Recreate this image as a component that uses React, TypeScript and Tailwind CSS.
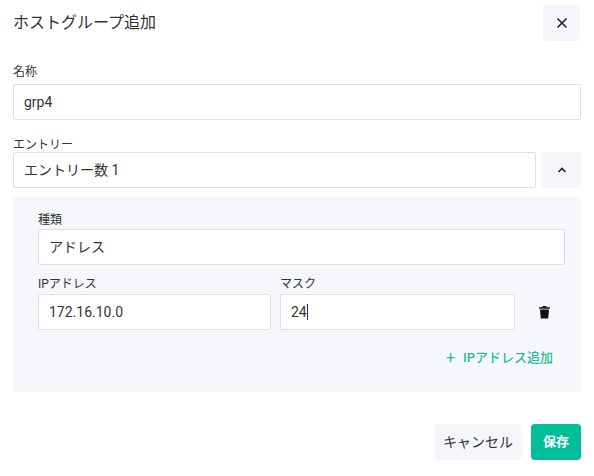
export default function App() {
  const f = { fontFamily: 'Roboto, "Noto Sans CJK JP", sans-serif' };
  const inp = "h-[36px] w-full border border-[#dcdfe6] rounded-[2px] bg-white flex items-center px-[10px] text-[14px] text-[#333]";
  return (
    <div style={f} className="w-[594px] h-[476px] bg-white px-[13px] pt-[4px] text-[#333]">
      <div className="flex items-center justify-between h-[37px]">
        <div className="text-[16px] text-[#333]">ホストグループ追加</div>
        <div className="w-[37px] h-[36px] mr-[1px] rounded-[4px] bg-[#f5f6fa] flex items-center justify-center">
          <svg width="12" height="12" viewBox="0 0 12 12" stroke="#222" strokeWidth="1.6"><path d="M1.5 1.5l9 9M10.5 1.5l-9 9"/></svg>
        </div>
      </div>
      <div className="mt-[22px] text-[12px] h-[19px]">名称</div>
      <div className={inp + " mt-[2px]"}>grp4</div>
      <div className="mt-[16px] text-[12px] h-[19px]">エントリー</div>
      <div className="flex gap-[6px] mt-[-3px]">
        <div className={inp + " flex-1"}>エントリー数 1</div>
        <div className="w-[39px] h-[36px] rounded-[4px] bg-[#f5f6fa] flex items-center justify-center">
          <svg width="10" height="6" viewBox="0 0 10 6" stroke="#222" strokeWidth="1.6" fill="none"><path d="M1.5 5L5 1.5 8.5 5"/></svg>
        </div>
      </div>
      <div className="mt-[9px] h-[195px] bg-[#f6f7fb] rounded-[4px] pl-[25px] pr-[16px] pt-[14px]">
        <div className="text-[12px] h-[18px]">種類</div>
        <div className={inp}>アドレス</div>
        <div className="flex mt-[10px] gap-[9px] items-end">
          <div className="w-[233px] shrink-0">
            <div className="text-[12px] h-[19px]">IPアドレス</div>
            <div className={inp}>172.16.10.0</div>
          </div>
          <div className="w-[235px] shrink-0">
            <div className="text-[12px] h-[19px]">マスク</div>
            <div className={inp + " border-[#3cc7a8]"}>24<span className="inline-block w-px h-[16px] bg-[#333]"></span></div>
          </div>
          <div className="w-[56px] h-[36px] flex items-center justify-center">
            <svg width="11" height="13" viewBox="0 0 11 13" fill="#111"><rect x="0" y="1.2" width="11" height="1.5" rx="0.4"/><rect x="3.5" y="0" width="4" height="1.5"/><path d="M1 3.5h9l-0.8 9h-7.4z"/></svg>
          </div>
        </div>
        <div className="flex justify-end pr-[12px] mt-[16px] text-[#1fbf9a] text-[13px] font-medium items-center gap-[8px]">
          <span className="text-[16px] font-normal">+</span>IPアドレス追加
        </div>
      </div>
      <div className="flex justify-end gap-[9px] mt-[32px]">
        <div className="w-[88px] h-[36px] rounded-[4px] bg-[#f5f6fa] flex items-center justify-center text-[14px]">キャンセル</div>
        <div className="w-[50px] h-[36px] rounded-[4px] bg-[#00bf9a] text-white flex items-center justify-center text-[13px] font-bold">保存</div>
      </div>
    </div>
  );
}
